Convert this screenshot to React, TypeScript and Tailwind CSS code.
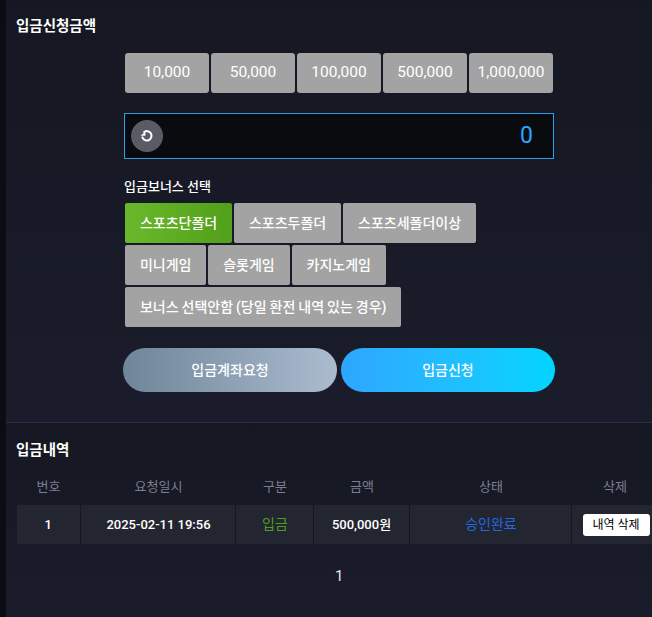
const font = "font-['Roboto','Noto_Sans_CJK_KR',sans-serif]";

const amounts = ["10,000", "50,000", "100,000", "500,000", "1,000,000"];
const bonusRows = [
  ["스포츠단폴더", "스포츠두폴더", "스포츠세폴더이상"],
  ["미니게임", "슬롯게임", "카지노게임"],
  ["보너스 선택안함 (당일 환전 내역 있는 경우)"],
];

function ResetIcon() {
  return (
    <svg className="h-[14px] w-[14px]" viewBox="0 0 14 14" fill="none">
      <path d="M3.6 3.4A4.7 4.7 0 1 1 2.2 7.6" stroke="white" strokeWidth={2} />
      <path d="M0.6 6.8h4.8V2.4z" fill="white" />
    </svg>
  );
}

export default function App() {
  return (
    <div className={`${font} flex h-[617px] w-[652px] overflow-hidden bg-[#0b0c14] text-white`}>
      <div className="w-[6px] shrink-0" />
      <div className="flex min-w-0 flex-1 flex-col">
        {/* 입금신청 */}
        <section className="h-[423px] border-b border-[#2b2d3a] bg-linear-to-b from-[#151822] to-[#1a1c2b] pt-[17px]">
          <h2 className="pl-[10px] text-[14.5px] leading-[20px] font-bold">입금신청금액</h2>
          <div className="mt-[16px] ml-[119px] flex gap-[2px]">
            {amounts.map((a) => (
              <button
                key={a}
                className="h-[40px] w-[84px] rounded-[3px] bg-[#a3a3a3] text-[15.5px] text-white"
              >
                {a}
              </button>
            ))}
          </div>
          <div className="mt-[20px] ml-[118px] flex h-[46px] w-[430px] items-center justify-between border border-[#2c9fe8] bg-[#0a0b0f] pr-[20px] pl-[6px]">
            <div className="flex h-[32px] w-[32px] items-center justify-center rounded-full bg-[#5b5b66]">
              <ResetIcon />
            </div>
            <span className="text-[23px] text-[#2ba6ff]">0</span>
          </div>
          <p className="mt-[19px] ml-[118px] text-[13px] leading-[18px] font-medium">입금보너스 선택</p>
          <div className="mt-[7px] ml-[119px] flex flex-col gap-[2px]">
            {bonusRows.map((row, i) => (
              <div key={i} className="flex gap-[2px]">
                {row.map((b) => (
                  <button
                    key={b}
                    className={`h-[40px] rounded-[2px] px-[14.9px] text-[14px] font-medium text-white [word-spacing:-0.5px] ${
                      b === "스포츠단폴더"
                        ? "bg-linear-to-r from-[#6ab82a] to-[#52a01a]"
                        : "bg-[#a3a3a3]"
                    }`}
                  >
                    {b}
                  </button>
                ))}
              </div>
            ))}
          </div>
          <div className="mt-[21px] ml-[117px] flex gap-[4px]">
            <button className="h-[44px] w-[214px] rounded-full bg-linear-to-r from-[#708599] to-[#abbccf] text-[14px] font-medium">
              입금계좌요청
            </button>
            <button className="h-[44px] w-[214px] rounded-full bg-linear-to-r from-[#2ea6ff] to-[#00d5ff] text-[14px] font-medium">
              입금신청
            </button>
          </div>
        </section>

        {/* 입금내역 */}
        <section className="flex-1 bg-linear-to-b from-[#151822] to-[#1a1c2b] pt-[18px]">
          <h2 className="pl-[10px] text-[14.5px] leading-[20px] font-bold">입금내역</h2>
          <table className="mt-[7px] ml-[11px] w-[636px] table-fixed border-collapse text-center text-[13px]">
            <colgroup>
              <col className="w-[63px]" />
              <col className="w-[155px]" />
              <col className="w-[78px]" />
              <col className="w-[96px]" />
              <col className="w-[162px]" />
              <col className="w-[82px]" />
            </colgroup>
            <thead>
              <tr className="h-[37px] text-[#7b7f8f]">
                <th className="font-normal">번호</th>
                <th className="pl-[2px] font-normal">요청일시</th>
                <th className="pl-[2px] font-normal">구분</th>
                <th className="pl-[2px] font-normal">금액</th>
                <th className="pl-[2px] font-normal">상태</th>
                <th className="pl-[6px] font-normal">삭제</th>
              </tr>
            </thead>
            <tbody>
              <tr className="h-[39px] bg-[#232530] font-medium">
                <td className="border-r border-[#15171f]">1</td>
                <td className="border-r border-[#15171f] pl-[2px]">2025-02-11 19:56</td>
                <td className="border-r border-[#15171f] pl-[2px] text-[14px] font-normal text-[#4f9f1f]">입금</td>
                <td className="border-r border-[#15171f] pl-[1px]">500,000원</td>
                <td className="border-r border-[#15171f] pl-[2px] text-[14px] font-normal text-[#2268e0]">승인완료</td>
                <td className="text-left">
                  <button className="ml-[11px] h-[22px] w-[67px] rounded-[3px] bg-white text-[12px] font-normal text-black">
                    내역 삭제
                  </button>
                </td>
              </tr>
            </tbody>
          </table>
          <p className="mt-[22px] pl-[329px] text-[15px] leading-[20px] text-[#e4e8f0]">1</p>
        </section>
      </div>
    </div>
  );
}
